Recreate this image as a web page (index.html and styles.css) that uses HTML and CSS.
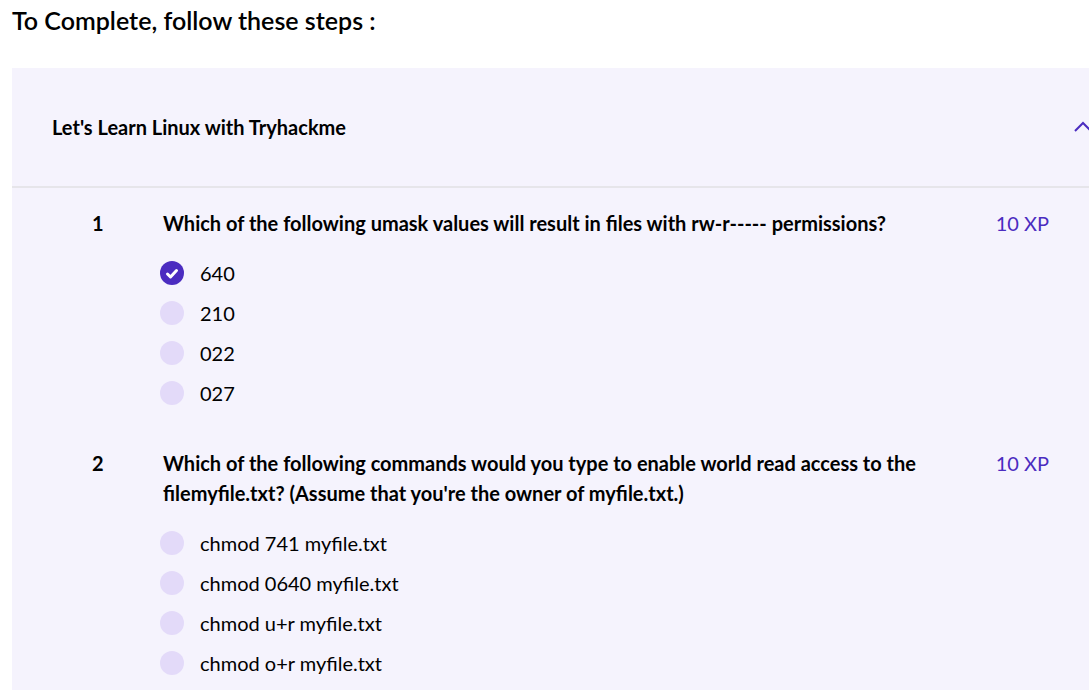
FILE: index.html
```html
<!DOCTYPE html>
<html lang="en">
<head>
<meta charset="utf-8">
<meta name="viewport" content="width=device-width, initial-scale=1">
<title>Let's Learn Linux with Tryhackme</title>
<link rel="stylesheet" href="styles.css">
</head>
<body>
<main class="page">
  <h1 class="page-title">To Complete, follow these steps :</h1>
  <section class="panel">
    <header class="panel-header">
      <h2 class="panel-title">Let's Learn Linux with Tryhackme</h2>
      <button class="toggle" type="button" aria-expanded="true" aria-label="Collapse section">
        <svg class="chevron" viewBox="0 0 18 14" aria-hidden="true"><path d="M1 11 9 3l8 8"/></svg>
      </button>
    </header>
    <form class="questions">
      <fieldset class="question" aria-labelledby="q1">
        <span class="number">1</span>
        <div class="content">
          <p class="prompt" id="q1">Which of the following umask values will result in files with rw-r----- permissions?</p>
          <div class="options">
            <label class="option"><span class="mark"><input class="radio" type="radio" name="q1" checked><svg class="check" viewBox="0 0 24 24" aria-hidden="true"><path d="M7.500 13 10.500 16 16.500 9.500"/></svg></span>640</label>
            <label class="option"><input class="radio" type="radio" name="q1">210</label>
            <label class="option"><input class="radio" type="radio" name="q1">022</label>
            <label class="option"><input class="radio" type="radio" name="q1">027</label>
          </div>
        </div>
        <span class="points">10 XP</span>
      </fieldset>
      <fieldset class="question" aria-labelledby="q2">
        <span class="number">2</span>
        <div class="content">
          <p class="prompt" id="q2">Which of the following commands would you type to enable world read access to the filemyfile.txt? (Assume that you're the owner of myfile.txt.)</p>
          <div class="options">
            <label class="option"><input class="radio" type="radio" name="q2">chmod 741 myfile.txt</label>
            <label class="option"><input class="radio" type="radio" name="q2">chmod 0640 myfile.txt</label>
            <label class="option"><input class="radio" type="radio" name="q2">chmod u+r myfile.txt</label>
            <label class="option"><input class="radio" type="radio" name="q2">chmod o+r myfile.txt</label>
          </div>
        </div>
        <span class="points">10 XP</span>
      </fieldset>
    </form>
  </section>
</main>
</body>
</html>
```
FILE: styles.css
```css
* { box-sizing: border-box; }

body {
  margin: 0;
  background: #fff;
  color: #000;
  font-family: Lato, sans-serif;
  font-size: 20px;
  line-height: 30px;
  overflow-x: hidden;
}

.page {
  display: flex;
  flex-direction: column;
  min-height: 100vh;
  padding: 5px 0 0 12px;
}

.page-title {
  margin: 0 0 33px;
  font-size: 25px;
  line-height: 30px;
  font-weight: 600;
}

.panel {
  flex: 1;
  background: #f5f3fd;
}

.panel-header {
  display: flex;
  align-items: center;
  justify-content: space-between;
  height: 120px;
  padding-left: 40px;
  border-bottom: 2px solid #e6e5ea;
}

.panel-title {
  margin: 0;
  font-size: 20px;
  font-weight: 700;
}

.toggle {
  display: flex;
  margin-right: -3px;
  padding: 0;
  border: 0;
  background: none;
}

.chevron {
  width: 18px;
  height: 14px;
  fill: none;
  stroke: #4b2cc0;
  stroke-width: 2;
}

.questions {
  display: grid;
  gap: 35px;
  padding: 20px 40px 0 80px;
}

.question {
  display: grid;
  grid-template-columns: 71px minmax(0, 1fr) auto;
  min-width: 0;
  margin: 0;
  padding: 0;
  border: 0;
}

.number, .prompt { font-weight: 700; }

.prompt {
  max-width: 760px;
  margin: 0;
}

.options { margin: 15px 0 0 -3px; }

.option {
  display: flex;
  align-items: center;
  gap: 16px;
  height: 40px;
}

.radio {
  appearance: none;
  width: 24px;
  height: 24px;
  margin: 0;
  border-radius: 50%;
  background: #e3daf9;
}

.radio:checked { background: #4b2cc0; }

.mark {
  position: relative;
  display: flex;
}

.check {
  position: absolute;
  inset: 0;
  fill: none;
  stroke: #fff;
  stroke-width: 3;
  stroke-linecap: round;
  stroke-linejoin: round;
  pointer-events: none;
}

.radio:not(:checked) + .check { display: none; }

.points { color: #4b2cc0; }
```
